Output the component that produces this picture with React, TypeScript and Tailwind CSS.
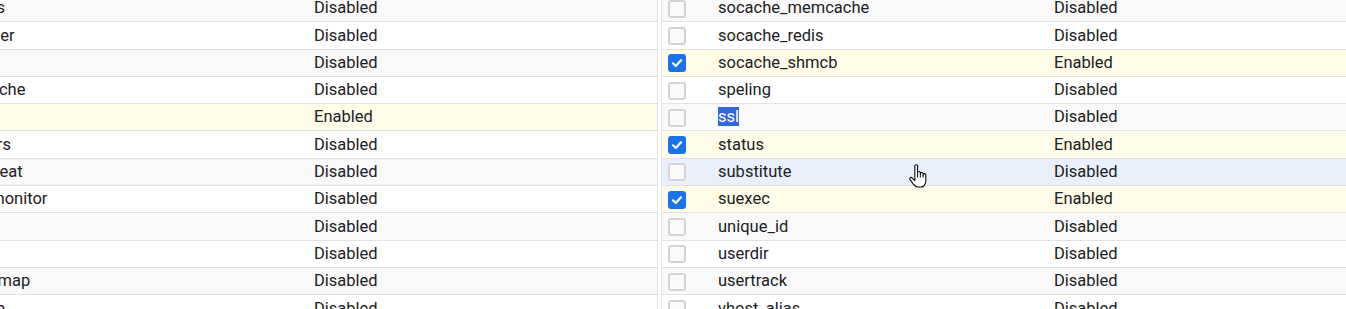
import clsx from 'clsx';

type Mod = { name: string; enabled: boolean };

const leftMods: Mod[] = [
  { name: 'expires', enabled: false },
  { name: 'ext_filter', enabled: false },
  { name: 'fcgid', enabled: false },
  { name: 'file_cache', enabled: false },
  { name: 'filter', enabled: true },
  { name: 'headers', enabled: false },
  { name: 'heartbeat', enabled: false },
  { name: 'heartmonitor', enabled: false },
  { name: 'http2', enabled: false },
  { name: 'ident', enabled: false },
  { name: 'imagemap', enabled: false },
  { name: 'include', enabled: false },
];

const rightMods: Mod[] = [
  { name: 'socache_memcache', enabled: false },
  { name: 'socache_redis', enabled: false },
  { name: 'socache_shmcb', enabled: true },
  { name: 'speling', enabled: false },
  { name: 'ssl', enabled: false },
  { name: 'status', enabled: true },
  { name: 'substitute', enabled: false },
  { name: 'suexec', enabled: true },
  { name: 'unique_id', enabled: false },
  { name: 'userdir', enabled: false },
  { name: 'usertrack', enabled: false },
  { name: 'vhost_alias', enabled: false },
];

function Checkbox({ checked }: { checked: boolean }) {
  if (checked) {
    return (
      <span className="flex h-[18px] w-[18px] items-center justify-center rounded-[3px] bg-[#1a73e8]">
        <svg viewBox="0 0 12 12" className="h-[12px] w-[12px]">
          <path d="M2 6.3 L4.8 9 L10 3.2" fill="none" stroke="#fff" strokeWidth="2.2" strokeLinecap="round" strokeLinejoin="round" />
        </svg>
      </span>
    );
  }
  return <span className="block h-[18px] w-[18px] rounded-[3px] border-2 border-[#d3d3d3] bg-[#fafafa]" />;
}

function ModRow({
  mod,
  index,
  nameWidth,
  hover,
  selected,
}: {
  mod: Mod;
  index: number;
  nameWidth: string;
  hover?: boolean;
  selected?: boolean;
}) {
  return (
    <div
      className={clsx(
        'flex h-[27.3px] items-center border-b border-[#e2e2e2] pt-[1px]',
        hover ? 'bg-[#e9f0fb]' : mod.enabled ? 'bg-[#fffde8]' : index % 2 === 0 ? 'bg-[#f9f9f9]' : 'bg-white',
      )}
    >
      <div className="flex w-[56px] shrink-0 items-center pl-[6px]">
        <Checkbox checked={mod.enabled} />
      </div>
      <div className={clsx('shrink-0 whitespace-nowrap', nameWidth)}>
        {selected ? <span className="bg-[#3367d6] text-white">{mod.name}</span> : mod.name}
      </div>
      <div className="whitespace-nowrap">{mod.enabled ? 'Enabled' : 'Disabled'}</div>
    </div>
  );
}

function HandCursor() {
  return (
    <svg viewBox="0 0 17 23" className="absolute left-[909px] top-[164px] h-[25px] w-[18px]">
      <path
        d="M5.5 1.6 C5.5 0.8 6.1 0.4 6.8 0.4 C7.5 0.4 8.1 0.8 8.1 1.6 L8.1 8 C8.1 7.3 8.7 6.8 9.4 6.8 C10.1 6.8 10.7 7.3 10.7 8 L10.7 9 C10.7 8.3 11.3 7.8 12 7.8 C12.7 7.8 13.3 8.3 13.3 9 L13.3 10 C13.3 9.3 13.9 8.8 14.6 8.8 C15.3 8.8 15.9 9.3 15.9 10 L15.9 15.5 C15.9 18.5 14 21.5 11 21.5 L8.5 21.5 C6.5 21.5 5.5 20.5 4.3 19 L1 14.5 C0.5 13.8 0.7 13 1.3 12.6 C1.9 12.2 2.7 12.4 3.2 13 L5.5 15.5 Z"
        fill="#fff"
        stroke="#000"
        strokeWidth="1"
        strokeLinejoin="round"
      />
      <path d="M8.1 8 V12.5 M10.7 9 V12.5 M13.3 10 V12.5" stroke="#000" strokeWidth="0.9" fill="none" />
    </svg>
  );
}

export default function App() {
  return (
    <div
      className="relative flex h-[309px] w-[1346px] overflow-hidden bg-white text-[16.5px] text-[#202124]"
      style={{ fontFamily: 'Roboto, "Liberation Sans", sans-serif' }}
    >
      {/* left table, scrolled sideways */}
      <div className="w-[658px] shrink-0 overflow-hidden border-r border-[#e2e2e2]">
        <div className="-ml-[104px] -mt-[5px]">
          {leftMods.map((mod, i) => (
            <ModRow key={mod.name} mod={mod} index={i} nameWidth="w-[362px]" />
          ))}
        </div>
      </div>
      <div className="w-[3px] shrink-0" />
      {/* right table */}
      <div className="flex-1 overflow-hidden border-l border-[#e2e2e2]">
        <div className="-mt-[5px]">
          {rightMods.map((mod, i) => (
            <ModRow
              key={mod.name}
              mod={mod}
              index={i}
              nameWidth="w-[336px]"
              hover={mod.name === 'substitute'}
              selected={mod.name === 'ssl'}
            />
          ))}
        </div>
      </div>
      <HandCursor />
    </div>
  );
}
